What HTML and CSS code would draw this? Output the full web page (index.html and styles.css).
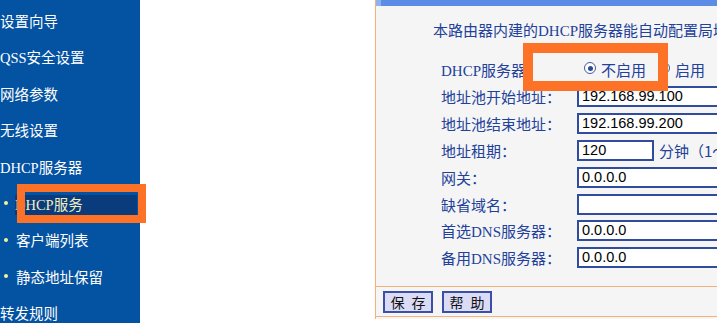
FILE: index.html
```html
<!DOCTYPE html>
<html lang="zh-CN">
<head>
<meta charset="utf-8">
<title>DHCP服务</title>
<link rel="stylesheet" href="styles.css">
</head>
<body>
<div class="page">
  <nav class="sidebar">
    <div class="item">设置向导</div>
    <div class="item">QSS安全设置</div>
    <div class="item">网络参数</div>
    <div class="item">无线设置</div>
    <div class="item">DHCP服务器</div>
    <div class="item sub"><span class="dot"></span><span class="sel">DHCP服务</span></div>
    <div class="item sub"><span class="dot"></span><span>客户端列表</span></div>
    <div class="item sub"><span class="dot"></span><span>静态地址保留</span></div>
    <div class="item">转发规则</div>
  </nav>
  <div class="gap"></div>
  <section class="panel">
    <div class="band"></div>
    <div class="main">
      <p class="intro">本路由器内建的DHCP服务器能自动配置局域网中各计算机的TCP/IP协议。</p>
      <div class="row">
        <span class="label">DHCP服务器：</span>
        <span class="radio checked"></span><span class="rtext">不启用</span>
        <span class="radio second"></span><span class="rtext">启用</span>
      </div>
      <div class="row"><span class="label">地址池开始地址：</span><span class="field">192.168.99.100</span></div>
      <div class="row"><span class="label">地址池结束地址：</span><span class="field">192.168.99.200</span></div>
      <div class="row"><span class="label">地址租期：</span><span class="field short">120</span><span class="unit">分钟（1～2880分钟，缺省为120分钟）</span></div>
      <div class="row"><span class="label">网关：</span><span class="field">0.0.0.0</span></div>
      <div class="row"><span class="label">缺省域名：</span><span class="field"></span></div>
      <div class="row"><span class="label">首选DNS服务器：</span><span class="field">0.0.0.0</span></div>
      <div class="row"><span class="label">备用DNS服务器：</span><span class="field">0.0.0.0</span></div>
    </div>
    <div class="actions">
      <span class="btn">保 存</span>
      <span class="btn">帮 助</span>
    </div>
  </section>
  <div class="mark mark-nav"></div>
  <div class="mark mark-radio"></div>
</div>
</body>
</html>
```
FILE: styles.css
```css
html, body {
  margin: 0;
  padding: 0;
  background: #ffffff;
  overflow: hidden;
}
.page {
  position: relative;
  display: flex;
  width: 900px;
  height: 323px;
  font-family: "Liberation Serif", "Noto Sans CJK SC", serif;
}
.sidebar {
  width: 140px;
  flex-shrink: 0;
  background: #0452a2;
  padding-top: 3.5px;
  box-sizing: border-box;
}
.item {
  height: 36.6px;
  line-height: 36.6px;
  font-size: 14.5px;
  color: #ffffff;
  white-space: nowrap;
  display: flex;
  align-items: center;
}
.item.sub {
  padding-left: 4px;
}
.dot {
  width: 4px;
  height: 4px;
  border-radius: 50%;
  background: #f4f29a;
  margin-right: 8px;
  margin-top: -3px;
}
.sel {
  display: inline-block;
  background: #0a3b7c;
  color: #f2efbf;
  width: 122px;
  height: 20px;
  line-height: 20px;
  margin-left: -1px;
}
.gap {
  width: 235px;
  flex-shrink: 0;
}
.panel {
  width: 460px;
  flex-shrink: 0;
  height: 319px;
  border-left: 1px solid #f2b27a;
  display: flex;
  flex-direction: column;
  background: #f5f5f5;
}
.band {
  height: 6px;
  background: linear-gradient(to right, #8fb1f0 0, #8fb1f0 5px, #5b8de6 5px);
}
.main {
  height: 281px;
  box-sizing: border-box;
  border-bottom: 1px solid #f2b27a;
  padding: 15px 0 0 57px;
  color: #22419a;
}
.intro {
  margin: 0 0 18px 0;
  font-size: 15px;
  line-height: 20px;
  white-space: nowrap;
}
.row {
  display: flex;
  align-items: center;
  height: 21px;
  margin-bottom: 6px;
  margin-left: 8px;
  font-size: 15px;
  white-space: nowrap;
}
.row:nth-child(n+5) {
  margin-bottom: 5.8px;
}
.label {
  width: 136px;
  flex-shrink: 0;
}
.radio {
  width: 12px;
  height: 12px;
  flex-shrink: 0;
  box-sizing: border-box;
  border: 1.5px solid #44599e;
  border-radius: 50%;
  background: #ffffff;
  margin-left: 7px;
  margin-top: -3px;
  display: flex;
  align-items: center;
  justify-content: center;
}
.radio.checked::after {
  content: "";
  width: 5px;
  height: 5px;
  border-radius: 50%;
  background: #2c4aa0;
}
.radio.second {
  margin-left: 12px;
}
.rtext {
  margin-left: 5px;
  font-family: "Noto Sans CJK SC", sans-serif;
  font-size: 15px;
}
.field {
  display: block;
  flex-shrink: 0;
  width: 170px;
  height: 21px;
  box-sizing: border-box;
  border: 2px solid #2f4c9e;
  background: #ffffff;
  color: #000000;
  font-family: "Liberation Sans", "Noto Sans CJK SC", sans-serif;
  font-size: 14.5px;
  line-height: 17px;
  padding-left: 3px;
}
.field.short {
  width: 77px;
}
.unit {
  margin-left: 5px;
  font-family: "Noto Sans CJK SC", sans-serif;
  font-size: 15px;
}
.actions {
  height: 30px;
  box-sizing: border-box;
  border-bottom: 1px solid #f2b27a;
  display: flex;
  align-items: center;
  gap: 9px;
  padding-left: 7px;
  padding-top: 1px;
}
.btn {
  width: 50px;
  height: 22px;
  box-sizing: border-box;
  border: 2px solid #3b4fa6;
  background: #dadcf6;
  color: #111111;
  font-family: "Noto Sans CJK SC", sans-serif;
  font-size: 14px;
  line-height: 18px;
  text-align: center;
  word-spacing: 4px;
}
.mark {
  position: absolute;
  box-sizing: border-box;
  border: 8px solid #fd7227;
}
.mark-nav {
  left: 17px;
  top: 184px;
  width: 129px;
  height: 39px;
}
.mark-radio {
  left: 523px;
  top: 43px;
  width: 145px;
  height: 48px;
  border-width: 10px;
}
```
